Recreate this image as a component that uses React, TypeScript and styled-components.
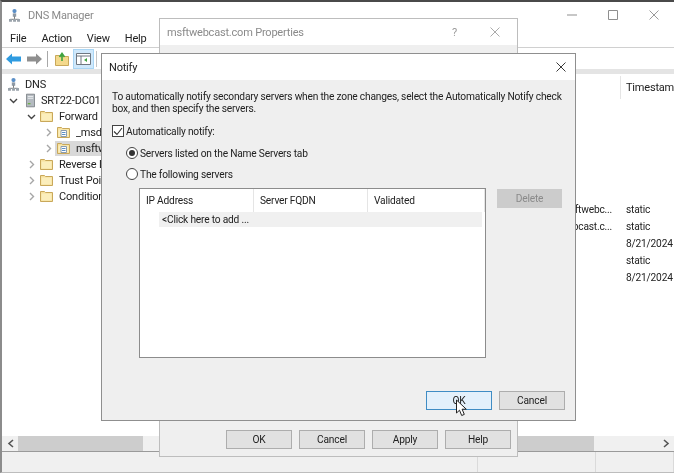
import { Fragment } from 'react';
import styled, { createGlobalStyle } from 'styled-components';

const GlobalStyle = createGlobalStyle`
    html, body {
        margin: 0;
        background: #fff;
    }
    * {
        box-sizing: border-box;
    }
`;

const Desktop = styled.div`
    position: relative;
    width: 674px;
    height: 473px;
    overflow: hidden;
    font-family: Roboto, "Open Sans", sans-serif;
    font-size: 10.2px;
    letter-spacing: -0.2px;
    color: #222;
    background: #fff;
    filter: blur(0.35px);
`;

// the three windows sit on a desktop so they are placed absolutely
const MainWindow = styled.div`
    position: absolute;
    inset: 0;
    display: flex;
    flex-direction: column;
    border-top: 2px solid #4a4a4a;
    border-left: 2px solid #8c8c8c;
    border-bottom: 1px solid #bdbdbd;
`;

const TitleBar = styled.div`
    height: 26px;
    flex: none;
    display: flex;
    align-items: center;
    padding-left: 7px;
    gap: 8px;
    color: #8a8a8a;
    font-size: 11px;
`;

const WindowControls = styled.div`
    margin-left: auto;
    display: flex;
    color: #8f8f8f;
`;

const ControlSlot = styled.div`
    width: 41px;
    height: 26px;
    display: flex;
    align-items: center;
    justify-content: center;
`;

const MenuBar = styled.div`
    height: 20px;
    flex: none;
    display: flex;
    align-items: center;
    padding: 2px 0 0 8px;
    gap: 15px;
    font-size: 11px;
    border-bottom: 1px solid #d0d0d0;
`;

const Toolbar = styled.div`
    height: 21px;
    flex: none;
    display: flex;
    align-items: center;
    padding-left: 4px;
`;

const ToolDivider = styled.div`
    width: 1px;
    height: 16px;
    background: #a8a8a8;
    margin: 0 7px 0 5px;
`;

const ToolToggle = styled.div`
    width: 21px;
    height: 20px;
    display: flex;
    align-items: center;
    justify-content: center;
    background: #cfe8fb;
    border: 1px solid #a9d6f5;
    margin-left: 4px;
`;

const ToolGap = styled.div`
    width: 1px;
    height: 16px;
    background: #c4c4c4;
    margin-left: 2px;
`;

const Band = styled.div`
    height: 5px;
    flex: none;
    background: #e4e4e4;
`;

const Panes = styled.div`
    flex: 1;
    min-height: 0;
    display: flex;
`;

const TreePane = styled.div`
    width: 298px;
    flex: none;
    display: flex;
    flex-direction: column;
    padding-top: 2px;
`;

const TreeRow = styled.div<{ $indent: number }>`
    height: 16px;
    display: flex;
    align-items: center;
    padding-left: ${(p) => p.$indent}px;
    gap: 4px;
    white-space: nowrap;
    font-size: 11px;
`;

const ChevronSlot = styled.div`
    width: 10px;
    flex: none;
    display: flex;
    justify-content: center;
`;

const ServerSlot = styled.div`
    margin-left: 4px;
    display: flex;
`;

const TreeNode = styled.div<{ $selected?: boolean }>`
    height: 15px;
    display: flex;
    align-items: center;
    gap: 4px;
    margin-left: -2px;
    padding: 0 2px;
    background: ${(p) => (p.$selected ? '#d9d9d9' : 'transparent')};
`;

const TreeLabel = styled.span`
    padding: 1px 2px 0;
`;

const ListPane = styled.div`
    flex: 1;
    display: flex;
    flex-direction: column;
    border-right: 2px solid #f0f0f0;
`;

const ListHeader = styled.div`
    height: 23px;
    flex: none;
    margin-top: 2px;
    display: flex;
    align-items: center;
    padding-left: 320px;
`;

const HeaderCell = styled.div`
    border-left: 1px solid #e5e5e5;
    height: 100%;
    padding-left: 5px;
    display: flex;
    align-items: center;
    white-space: nowrap;
    font-size: 11px;
`;

const ListRows = styled.div`
    margin-top: 102px;
    display: grid;
    grid-template-columns: 312px 1fr;
    column-gap: 14px;
    grid-auto-rows: 17px;
    align-items: center;
    font-size: 10.2px;
`;

const ListName = styled.div`
    text-align: right;
`;

const ScrollRow = styled.div`
    height: 15px;
    flex: none;
    display: flex;
    background: #f0f0f0;
`;

const ScrollSide = styled.div<{ $width: number }>`
    width: ${(p) => p.$width}px;
    flex: none;
    display: flex;
    align-items: center;
`;

const ScrollThumb = styled.div<{ $width: number; $left: number }>`
    width: ${(p) => p.$width}px;
    height: 100%;
    margin-left: ${(p) => p.$left}px;
    background: #cdcdcd;
`;

const ScrollTrackFill = styled.div`
    flex: 1;
`;

const StatusBar = styled.div`
    height: 21px;
    flex: none;
    display: flex;
    background: #f0f0f0;
    border-top: 1px solid #9a9a9a;
`;

const StatusCell = styled.div<{ $width?: number }>`
    width: ${(p) => (p.$width ? `${p.$width}px` : 'auto')};
    flex: ${(p) => (p.$width ? 'none' : 1)};
    border-right: 1px solid #dadada;
`;

const Dialog = styled.div<{ $left: number; $top: number; $width: number; $height: number; $edge: string }>`
    position: absolute;
    left: ${(p) => p.$left}px;
    top: ${(p) => p.$top}px;
    width: ${(p) => p.$width}px;
    height: ${(p) => p.$height}px;
    display: flex;
    flex-direction: column;
    background: #efefef;
    border: 1px solid ${(p) => p.$edge};
`;

const DialogTitle = styled.div<{ $muted?: boolean }>`
    height: 26px;
    flex: none;
    display: flex;
    align-items: center;
    padding-left: 7px;
    background: #fff;
    color: ${(p) => (p.$muted ? '#8a8a8a' : '#222')};
    font-size: 11px;
`;

const TitleButtons = styled.div<{ $inset: number }>`
    margin-left: auto;
    display: flex;
    align-items: center;
    gap: 33px;
    padding-right: ${(p) => p.$inset}px;
    color: #9a9a9a;
`;

const PropsFooter = styled.div`
    margin-top: auto;
    display: flex;
    justify-content: flex-end;
    gap: 7px;
    padding: 0 6px 7px 0;
`;

const Button = styled.div<{ $tone?: 'focus' | 'disabled' }>`
    width: 66px;
    height: 19px;
    display: flex;
    align-items: center;
    justify-content: center;
    background: ${(p) => (p.$tone === 'focus' ? '#e3f0fb' : p.$tone === 'disabled' ? '#cccccc' : '#e1e1e1')};
    border: 1px solid ${(p) => (p.$tone === 'focus' ? '#3f8cc4' : p.$tone === 'disabled' ? '#cccccc' : '#adadad')};
    color: ${(p) => (p.$tone === 'disabled' ? '#8a8a8a' : '#222')};
`;

const DeleteButton = styled(Button)`
    width: 65px;
    margin-top: 1px;
`;

const NotifyBody = styled.div`
    flex: 1;
    display: flex;
    flex-direction: column;
    padding: 11px 10px 10px;
`;

const Intro = styled.p`
    margin: 0;
    line-height: 12px;
    width: 456px;
`;

const CheckLine = styled.label`
    display: flex;
    align-items: center;
    gap: 2px;
    height: 14px;
    margin-top: 9px;
`;

const CheckBox = styled.span`
    width: 12px;
    height: 12px;
    flex: none;
    background: #fff;
    border: 1px solid #444;
    display: flex;
    align-items: center;
    justify-content: center;
`;

const RadioLine = styled.label<{ $gap: number }>`
    display: flex;
    align-items: center;
    gap: 2px;
    height: 14px;
    margin: ${(p) => p.$gap}px 0 0 14px;
`;

const Radio = styled.span<{ $on?: boolean }>`
    width: 12px;
    height: 12px;
    flex: none;
    border-radius: 50%;
    background: #fff;
    border: 1px solid #444;
    display: flex;
    align-items: center;
    justify-content: center;
    &::after {
        content: '';
        width: 6px;
        height: 6px;
        border-radius: 50%;
        background: ${(p) => (p.$on ? '#333' : 'transparent')};
    }
`;

const ServerArea = styled.div`
    display: flex;
    align-items: flex-start;
    gap: 11px;
    margin: 7px 0 0 27px;
`;

const ServerTable = styled.div`
    width: 347px;
    height: 170px;
    flex: none;
    background: #fff;
    border: 1px solid #8c8c8c;
`;

const TableHead = styled.div`
    height: 23px;
    display: grid;
    grid-template-columns: 114px 114px 1fr;
`;

const TableHeadCell = styled.div`
    display: flex;
    align-items: center;
    padding-left: 6px;
    border-right: 1px solid #e5e5e5;
`;

const AddRow = styled.div`
    height: 15px;
    margin: 0 3px 0 19px;
    padding-left: 3px;
    display: flex;
    align-items: center;
    background: #f0f0f0;
`;

const NotifyFooter = styled.div`
    margin-top: auto;
    display: flex;
    justify-content: flex-end;
    gap: 7px;
`;

const Pointer = styled.svg`
    position: absolute;
    left: 455px;
    top: 399px;
`;

function Chevron({ open }: { open?: boolean }) {
    return (
        <svg width="9" height="9" viewBox="0 0 9 9" fill="none" stroke={open ? '#444' : '#a6a6a6'} strokeWidth="1.4">
            <path d={open ? 'M1 3l3.5 3.5L8 3' : 'M3 1l3.5 3.5L3 8'} />
        </svg>
    );
}

function FolderIcon({ zone }: { zone?: boolean }) {
    return (
        <svg width="13" height="12" viewBox="0 0 13 12">
            <path d="M.5 1.5h4l1 1h7v9H.5z" fill="#f6df9c" stroke="#c9a85a" />
            <path d="M1.5 3.5h10v7h-10z" fill="#fbeebc" />
            {zone && <path d="M4 4.5h5.500v6H4z" fill="#fff" stroke="#8a9bb0" />}
            {zone && <path d="M5 6.500h3.500M5 8.500h3.500" stroke="#5b8fc7" />}
        </svg>
    );
}

function ServerIcon() {
    return (
        <svg width="9" height="15" viewBox="0 0 10 15">
            <path d="M.5.5h9v14h-9z" fill="#b4bac0" stroke="#7d8287" />
            <path d="M2 3h6M2 5h6" stroke="#eef0f2" />
            <path d="M2 11h3" stroke="#6fb04a" strokeWidth="1.500" />
        </svg>
    );
}

function DnsIcon() {
    return (
        <svg width="11" height="15" viewBox="0 0 13 16">
            <circle cx="6.500" cy="2.800" r="2.500" fill="#5b8fc7" />
            <path d="M4.500 5.500h4v4h-4z" fill="#8d99a5" />
            <path d="M6.500 9v3M1.500 12.500h10" stroke="#666" fill="none" />
            <path d="M0 12h3.500v3.500H0zM4.800 12h3.500v3.500H4.800zM9.500 12H13v3.500H9.500z" fill="#9aa3ab" />
        </svg>
    );
}

function CloseGlyph({ color }: { color: string }) {
    return (
        <svg width="10" height="10" viewBox="0 0 10 10" stroke={color} strokeWidth="0.9" fill="none">
            <path d="M.5.5l9 9M9.500.5l-9 9" />
        </svg>
    );
}

const treeChildren = [
    { name: '_msd', indent: 41, zone: true },
    { name: 'msftwebcast.com', indent: 41, zone: true, selected: true },
    { name: 'Reverse Lookup Zones', indent: 24 },
    { name: 'Trust Points', indent: 24 },
    { name: 'Conditional Forwarders', indent: 24 },
];

const listRows = [
    ['msftwebc...', 'static'],
    ['msftwebcast.c...', 'static'],
    ['', '8/21/2024'],
    ['', 'static'],
    ['', '8/21/2024'],
];

export default function App() {
    return (
        <Desktop>
            <GlobalStyle />
            <MainWindow>
                <TitleBar>
                    <DnsIcon />
                    DNS Manager
                    <WindowControls>
                        <ControlSlot>
                            <svg width="10" height="2" viewBox="0 0 10 2"><path d="M0 1h10" stroke="#8f8f8f" /></svg>
                        </ControlSlot>
                        <ControlSlot>
                            <svg width="10" height="10" viewBox="0 0 10 10"><path d="M.5.5h9v9h-9z" fill="none" stroke="#8f8f8f" /></svg>
                        </ControlSlot>
                        <ControlSlot>
                            <CloseGlyph color="#8f8f8f" />
                        </ControlSlot>
                    </WindowControls>
                </TitleBar>
                <MenuBar>
                    <span>File</span>
                    <span>Action</span>
                    <span>View</span>
                    <span>Help</span>
                </MenuBar>
                <Toolbar>
                    <svg width="15" height="12" viewBox="0 0 15 12"><path d="M0 6l6-5.500V3.500h9v5H6v3z" fill="#2f9be0" /></svg>
                    <svg width="16" height="12" viewBox="0 0 16 12" style={{ marginLeft: 5 }}><path d="M16 6L10 .5V3.500H1v5h9v3z" fill="#8f8f8f" /></svg>
                    <ToolDivider />
                    <svg width="14" height="14" viewBox="0 0 14 14">
                        <path d="M.5 3.500h4l1 1h8v9H.5z" fill="#f4d98c" stroke="#c9a85a" />
                        <path d="M7 9V3M4.500 5L7 1.500 9.500 5" fill="none" stroke="#3fa33f" strokeWidth="1.600" />
                    </svg>
                    <ToolToggle>
                        <svg width="15" height="12" viewBox="0 0 15 12">
                            <path d="M.5.500h14v11H.5z" fill="#fff" stroke="#6f7780" />
                            <path d="M.5 3h14M5 3v8" stroke="#6f7780" />
                            <path d="M11 5L8 7l3 2z" fill="#3fa33f" />
                        </svg>
                    </ToolToggle>
                    <ToolGap />
                </Toolbar>
                <Band />
                <Panes>
                    <TreePane>
                        <TreeRow $indent={6}>
                            <DnsIcon />
                            <TreeLabel>DNS</TreeLabel>
                        </TreeRow>
                        <TreeRow $indent={6}>
                            <ChevronSlot><Chevron open /></ChevronSlot>
                            <ServerSlot><ServerIcon /></ServerSlot>
                            <TreeLabel>SRT22-DC01</TreeLabel>
                        </TreeRow>
                        <TreeRow $indent={24}>
                            <ChevronSlot><Chevron open /></ChevronSlot>
                            <FolderIcon />
                            <TreeLabel>Forward Lookup Zones</TreeLabel>
                        </TreeRow>
                        {treeChildren.map((row) => (
                            <TreeRow key={row.name} $indent={row.indent}>
                                <ChevronSlot><Chevron /></ChevronSlot>
                                <TreeNode $selected={row.selected}>
                                    <FolderIcon zone={row.zone} />
                                    <TreeLabel>{row.name}</TreeLabel>
                                </TreeNode>
                            </TreeRow>
                        ))}
                    </TreePane>
                    <ListPane>
                        <ListHeader>
                            <HeaderCell>Timestamp</HeaderCell>
                        </ListHeader>
                        <ListRows>
                            {listRows.map(([name, value], i) => (
                                <Fragment key={i}>
                                    <ListName>{name}</ListName>
                                    <div>{value}</div>
                                </Fragment>
                            ))}
                        </ListRows>
                    </ListPane>
                </Panes>
                <ScrollRow>
                    <ScrollSide $width={298}>
                        <svg width="8" height="9" viewBox="0 0 8 9" style={{ marginLeft: 5 }} fill="none" stroke="#555" strokeWidth="1.600"><path d="M6 1L2 4.500 6 8" /></svg>
                        <ScrollThumb $width={125} $left={3} />
                    </ScrollSide>
                    <ScrollThumb $width={294} $left={0} />
                    <ScrollTrackFill />
                    <ScrollSide $width={12}>
                        <svg width="8" height="9" viewBox="0 0 8 9" fill="none" stroke="#555" strokeWidth="1.600"><path d="M2 1l4 3.500L2 8" /></svg>
                    </ScrollSide>
                </ScrollRow>
                <StatusBar>
                    <StatusCell $width={476} />
                    <StatusCell $width={118} />
                    <StatusCell />
                </StatusBar>
            </MainWindow>

            <Dialog $left={159} $top={18} $width={359} $height={439} $edge="#bdbdbd">
                <DialogTitle $muted>
                    msftwebcast.com Properties
                    <TitleButtons $inset={17}>
                        <span>?</span>
                        <CloseGlyph color="#a0a0a0" />
                    </TitleButtons>
                </DialogTitle>
                <PropsFooter>
                    <Button>OK</Button>
                    <Button>Cancel</Button>
                    <Button>Apply</Button>
                    <Button>Help</Button>
                </PropsFooter>
            </Dialog>

            <Dialog $left={101} $top={53} $width={475} $height={368} $edge="#8f8f8f">
                <DialogTitle>
                    Notify
                    <TitleButtons $inset={9}>
                        <CloseGlyph color="#222" />
                    </TitleButtons>
                </DialogTitle>
                <NotifyBody>
                    <Intro>
                        To automatically notify secondary servers when the zone changes, select the Automatically Notify check box, and then specify the servers.
                    </Intro>
                    <CheckLine>
                        <CheckBox>
                            <svg width="10" height="9" viewBox="0 0 10 9" fill="none" stroke="#333" strokeWidth="1.100"><path d="M1 4.500L4 7.500 9 1" /></svg>
                        </CheckBox>
                        Automatically notify:
                    </CheckLine>
                    <RadioLine $gap={8}>
                        <Radio $on />
                        Servers listed on the Name Servers tab
                    </RadioLine>
                    <RadioLine $gap={7}>
                        <Radio />
                        The following servers
                    </RadioLine>
                    <ServerArea>
                        <ServerTable>
                            <TableHead>
                                <TableHeadCell>IP Address</TableHeadCell>
                                <TableHeadCell>Server FQDN</TableHeadCell>
                                <TableHeadCell>Validated</TableHeadCell>
                            </TableHead>
                            <AddRow>&lt;Click here to add ...</AddRow>
                        </ServerTable>
                        <DeleteButton $tone="disabled">Delete</DeleteButton>
                    </ServerArea>
                    <NotifyFooter>
                        <Button $tone="focus">OK</Button>
                        <Button>Cancel</Button>
                    </NotifyFooter>
                </NotifyBody>
            </Dialog>

            <Pointer width="14" height="19" viewBox="0 0 14 19">
                <path d="M1.500 1v13l3-2.800 2.200 5.300 2.600-1.100-2.200-5.200h4.200z" fill="#fff" stroke="#222" strokeWidth="1" />
            </Pointer>
        </Desktop>
    );
}
